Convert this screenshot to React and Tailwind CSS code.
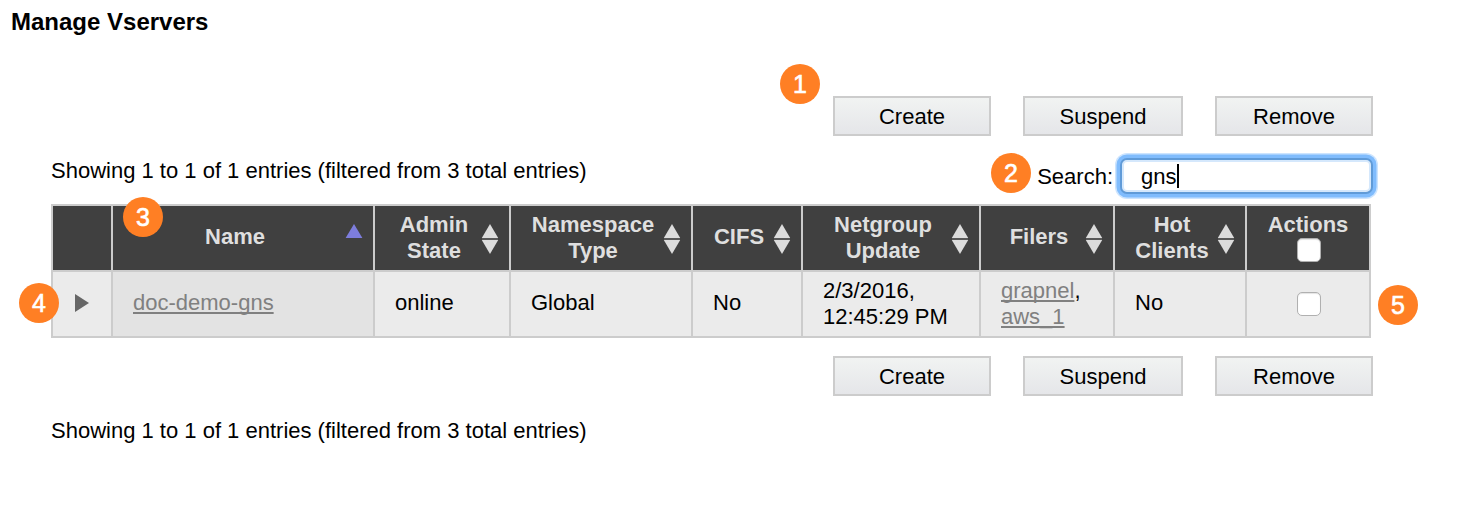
function Badge({ n, className }) {
  return (
    <span className={`absolute flex size-10 items-center justify-center rounded-full bg-[#ff7f24] pt-px font-['Liberation_Sans',sans-serif] text-[25px] leading-none text-white [-webkit-text-stroke:0.6px_white] ${className}`}>
      {n}
    </span>
  );
}

function SortIcon({ active }) {
  return (
    <svg viewBox="0 0 18 32" className="mr-[10px] mt-[2px] h-8 w-[18px] shrink-0">
      {active ? (
        <path d="M9 1 L17.4 15 H0.6 Z" fill="#7d7ddc" />
      ) : (
        <>
          <path d="M9 1 L17.2 15 H0.8 Z" fill="#dcdcdc" />
          <path d="M9 31 L17.2 17 H0.8 Z" fill="#dcdcdc" />
          <path d="M1 16 H17" stroke="#606060" strokeWidth="1.6" />
        </>
      )}
    </svg>
  );
}

function Head({ children, active, single }) {
  return (
    <th className="bg-[#404040] p-0 align-middle text-[#dfdfdf]">
      <div className="flex items-center pl-[12px]">
        <span className={`flex-1 whitespace-nowrap text-center ${single || active ? "pb-[2px]" : ""}`}>{children}</span>
        <SortIcon active={active} />
      </div>
    </th>
  );
}

function Cell({ children, single }) {
  return (
    <td className={`whitespace-nowrap bg-[#ebebeb] p-0 align-middle ${single ? "pb-[2px]" : ""}`}>
      <div className="pl-5">{children}</div>
    </td>
  );
}

function Link({ children }) {
  return (
    <a className="text-[#808080] underline decoration-2 underline-offset-2 [text-decoration-skip-ink:none]">{children}</a>
  );
}

function Check({ className }) {
  return (
    <span className={`mx-auto block size-6 rounded-[5px] border border-[#b0b0b0] bg-white shadow-[inset_0_1px_1px_#e4e4e4] ${className}`} />
  );
}

function Actions() {
  const button =
    "flex h-10 items-center justify-center border-2 border-[#cccccc] bg-linear-to-b from-[#f1f3f2] to-[#e5e6e9] pt-[2px] text-black";
  return (
    <div className="flex pl-[833px]">
      <button className={`${button} w-[158px]`}>Create</button>
      <button className={`${button} ml-8 w-40`}>Suspend</button>
      <button className={`${button} ml-8 w-[158px]`}>Remove</button>
    </div>
  );
}

const WIDTHS = [58, 260, 134, 180, 108, 176, 132, 130, 122];

export default function App() {
  return (
    <div className="relative h-[509px] w-[1460px] overflow-hidden bg-white font-['Liberation_Sans',Arial,sans-serif] text-[22px] leading-[26px] text-black">
      <h1 className="h-24 pl-[11px] pt-[9px] text-[24px] font-bold">Manage Vservers</h1>
      <Actions />
      <div className="flex h-[68px] items-start justify-between pl-[51px] pr-[87px]">
        <p className="pt-[22px]">Showing 1 to 1 of 1 entries (filtered from 3 total entries)</p>
        <div className="flex pt-[22px]">
          <label className="mr-[7px] pt-[6px]">Search:</label>
          <div className="flex h-9 w-[253px] items-center rounded-[7px] border-2 border-[#609bd8] bg-white pl-[19px] shadow-[inset_0_0_0_2px_#d5e8fc,0_0_0_3.5px_#80bcfd,0_0_0_5px_#cce4fe]">
            <span className="pt-[2px]">gns</span>
            <span className="ml-px h-6 w-[2px] bg-black" />
          </div>
        </div>
      </div>
      <table className="ml-[51px] w-[1320px] table-fixed border-separate border-spacing-[2px] bg-[#cccccc]">
        <colgroup>
          {WIDTHS.map((w, i) => (
            <col key={i} style={{ width: w }} />
          ))}
        </colgroup>
        <thead>
          <tr className="h-16">
            <th className="bg-[#404040] p-0" />
            <Head active>Name</Head>
            <Head>Admin<br />State</Head>
            <Head>Namespace<br />Type</Head>
            <Head single>CIFS</Head>
            <Head>Netgroup<br />Update</Head>
            <Head single>Filers</Head>
            <Head>Hot<br />Clients</Head>
            <th className="bg-[#404040] p-0 align-middle text-[#dfdfdf]">
              Actions
              <Check className="mb-[2px] translate-x-px" />
            </th>
          </tr>
        </thead>
        <tbody>
          <tr className="h-16">
            <td className="bg-[#ebebeb] p-0 pl-[22px] align-middle">
              <svg viewBox="0 0 14 18" className="mb-[2px] block h-[18px] w-[14px]">
                <path d="M0 0 L14 9 L0 18 Z" fill="#666666" />
              </svg>
            </td>
            <td className="bg-[#e3e3e3] p-0 pb-[2px] pl-5 align-middle"><Link>doc-demo-gns</Link></td>
            <Cell single>online</Cell>
            <Cell single>Global</Cell>
            <Cell single>No</Cell>
            <Cell>2/3/2016,<br />12:45:29 PM</Cell>
            <Cell><Link>grapnel</Link>,<br /><Link>aws_1</Link></Cell>
            <Cell single>No</Cell>
            <td className="bg-[#ebebeb] p-0 align-middle"><Check className="translate-x-px" /></td>
          </tr>
        </tbody>
      </table>
      <div className="pt-[18px]">
        <Actions />
      </div>
      <p className="pl-[51px] pt-[22px]">Showing 1 to 1 of 1 entries (filtered from 3 total entries)</p>

      <Badge n={1} className="left-[780px] top-16" />
      <Badge n={2} className="left-[991px] top-[153px]" />
      <Badge n={3} className="left-[123px] top-[197px]" />
      <Badge n={4} className="left-[19px] top-[283px]" />
      <Badge n={5} className="left-[1378px] top-[285px]" />
    </div>
  );
}
